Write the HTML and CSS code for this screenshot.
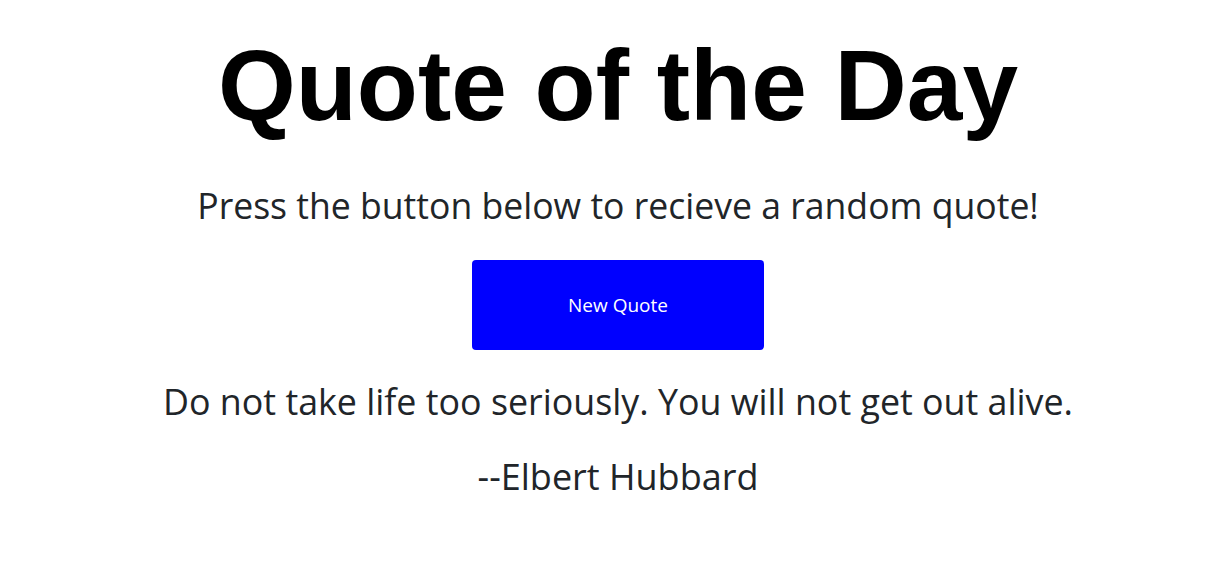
FILE: index.html
```html
<!DOCTYPE html>
<html>
<head>
<meta charset="utf-8">
<link rel="stylesheet" href="styles.css">
</head>
<body>
<main class="page">
  <h1 class="title">Quote of the Day</h1>
  <p class="lead">Press the button below to recieve a random quote!</p>
  <button class="btn-quote" type="button">New Quote</button>
  <p class="quote">Do not take life too seriously. You will not get out alive.</p>
  <p class="author">--Elbert Hubbard</p>
</main>
</body>
</html>
```
FILE: styles.css
```css
html, body {
  margin: 0;
  padding: 0;
  background: #fff;
}
.page {
  display: flex;
  flex-direction: column;
  align-items: center;
  padding-left: 18px;
  font-family: "Open Sans", "Noto Sans", sans-serif;
  color: #212529;
  text-align: center;
}
.title {
  font-family: "Liberation Sans", Arial, sans-serif;
  font-weight: 700;
  font-size: 100px;
  line-height: 120px;
  color: #000;
  margin: 25px 0 0 0;
}
.lead {
  font-size: 35.6px;
  line-height: 54px;
  margin: 33px 0 0 0;
}
.btn-quote {
  width: 292px;
  height: 90px;
  margin-top: 28px;
  background: #0000ff;
  color: #fff;
  border: none;
  border-radius: 4px;
  font-family: "Open Sans", "Noto Sans", sans-serif;
  font-size: 19px;
  padding: 0 0 0 0;
}
.quote {
  font-size: 35.8px;
  line-height: 54px;
  margin: 24px 0 0 0;
}
.author {
  font-size: 36px;
  line-height: 54px;
  margin: 22px 0 0 0;
}
```
